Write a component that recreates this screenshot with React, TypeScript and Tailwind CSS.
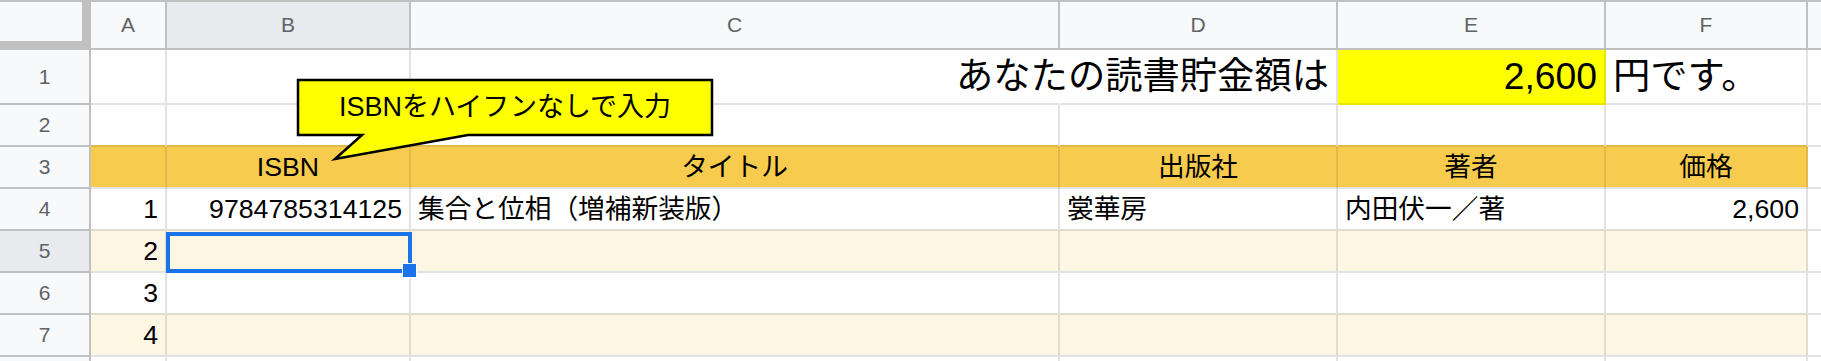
import React from "react";

const FONT = "font-['Liberation_Sans','Noto_Sans_CJK_JP',sans-serif]";

type Align = "l" | "r" | "c";

function Cell({
  className = "",
  align = "r",
  children,
}: {
  className?: string;
  align?: Align;
  children?: React.ReactNode;
}) {
  const a = align === "r" ? "justify-end" : align === "c" ? "justify-center" : "justify-start";
  return (
    <div className={`flex items-center whitespace-nowrap border-r-2 border-b-2 px-[7px] ${a} ${className}`}>
      {children}
    </div>
  );
}

function ColHead({ label, selected = false }: { label: string; selected?: boolean }) {
  return (
    <div
      className={`flex items-center justify-center border-t-2 border-r-2 border-b-2 border-[#c0c0c0] text-[21px] text-[#5f6368] ${
        selected ? "bg-[#e8eaed]" : "bg-[#f8f9fa]"
      }`}
    >
      {label}
    </div>
  );
}

function RowHead({ n, selected = false }: { n?: number; selected?: boolean }) {
  return (
    <div
      className={`flex items-center justify-center border-r-2 border-b-2 border-[#c0c0c0] text-[21px] text-[#5f6368] ${
        selected ? "bg-[#e8eaed]" : "bg-[#f8f9fa]"
      }`}
    >
      {n}
    </div>
  );
}

type RowDef = {
  n?: number;
  key: number;
  style: string;
  cells: { text?: string; align?: Align }[];
  selected?: boolean;
};

const WHITE = "bg-white border-[#e2e2e3]";
const WHITE_TO_BEIGE = "bg-white border-[#e2e2e3] border-b-[#e1dccb]";
const BEIGE = "bg-[#fdf6e3] border-[#e1dccb] border-b-[#e2e2e3]";

const dataRows: RowDef[] = [
  {
    n: 4,
    key: 4,
    style: WHITE_TO_BEIGE,
    cells: [
      { text: "1", align: "r" },
      { text: "9784785314125", align: "r" },
      { text: "集合と位相（増補新装版）", align: "l" },
      { text: "裳華房", align: "l" },
      { text: "内田伏一／著", align: "l" },
      { text: "2,600", align: "r" },
    ],
  },
  { n: 5, key: 5, style: BEIGE, selected: true, cells: [{ text: "2" }, {}, {}, {}, {}, {}] },
  { n: 6, key: 6, style: WHITE_TO_BEIGE, cells: [{ text: "3" }, {}, {}, {}, {}, {}] },
  { n: 7, key: 7, style: BEIGE, cells: [{ text: "4" }, {}, {}, {}, {}, {}] },
  { key: 8, style: WHITE, cells: [{}, {}, {}, {}, {}, {}] },
];

export default function App() {
  return (
    <div className={`relative h-[361px] w-[1821px] overflow-hidden bg-white text-black ${FONT}`}>
      <div className="grid grid-cols-[91px_76px_244px_649px_278px_268px_202px_1fr] grid-rows-[50px_55px_42px_42px_42px_42px_42px_42px_42px] text-[26.7px]">
        {/* Column headers */}
        <div className="border-t-2 border-r-[9px] border-b-[9px] border-[#c0c0c0] bg-[#f8f9fa]" />
        <ColHead label="A" />
        <ColHead label="B" selected />
        <ColHead label="C" />
        <ColHead label="D" />
        <ColHead label="E" />
        <ColHead label="F" />
        <ColHead label="" />

        {/* Row 1 */}
        <RowHead n={1} />
        <Cell className={WHITE} />
        <Cell className={WHITE} />
        <Cell className="bg-white border-[#e2e2e3] border-r-white" />
        <Cell className={`${WHITE} text-[37.3px]`} align="r">
          <span>あなたの読書貯金額は</span>
        </Cell>
        <Cell className="bg-[#ffff00] border-[#e6e600] text-[37.3px]" align="r">
          <span>2,600</span>
        </Cell>
        <Cell className={`${WHITE} text-[37.3px]`} align="l">
          <span>円です。</span>
        </Cell>
        <Cell className={WHITE} />

        {/* Row 2 */}
        <RowHead n={2} />
        <Cell className="bg-white border-[#e2e2e3] border-b-[#e0b94a]" />
        <Cell className="bg-white border-[#e2e2e3] border-b-[#e0b94a]" />
        <Cell className="bg-white border-[#e2e2e3] border-b-[#e0b94a]" />
        <Cell className="bg-white border-[#e2e2e3] border-b-[#e0b94a]" />
        <Cell className="bg-white border-[#e2e2e3] border-b-[#e0b94a]" />
        <Cell className="bg-white border-[#e2e2e3] border-b-[#e0b94a]" />
        <Cell className={WHITE} />

        {/* Row 3 - table header */}
        <RowHead n={3} />
        <Cell className="bg-[#f7cb4d] border-[#e0b94a] border-b-[#e2e2e3]" />
        <Cell className="bg-[#f7cb4d] border-[#e0b94a] border-b-[#e2e2e3]" align="c">
          ISBN
        </Cell>
        <Cell className="bg-[#f7cb4d] border-[#e0b94a] border-b-[#e2e2e3]" align="c">
          タイトル
        </Cell>
        <Cell className="bg-[#f7cb4d] border-[#e0b94a] border-b-[#e2e2e3]" align="c">
          出版社
        </Cell>
        <Cell className="bg-[#f7cb4d] border-[#e0b94a] border-b-[#e2e2e3]" align="c">
          著者
        </Cell>
        <Cell className="bg-[#f7cb4d] border-[#e0b94a] border-b-[#e2e2e3]" align="c">
          価格
        </Cell>
        <Cell className={WHITE} />

        {/* Data rows */}
        {dataRows.map((r) => (
          <React.Fragment key={r.key}>
            <RowHead n={r.n} selected={r.selected} />
            {r.cells.map((c, i) => (
              <Cell key={i} className={r.style} align={c.align ?? "r"}>
                {c.text}
              </Cell>
            ))}
            <Cell className={WHITE} />
          </React.Fragment>
        ))}
      </div>

      {/* Selection box around B5 */}
      <div className="absolute left-[166px] top-[232px] h-[41px] w-[246px] border-4 border-[#1a73e8]" />
      <div className="absolute left-[402px] top-[263px] h-[15px] w-[15px] border border-white bg-[#1a73e8]" />

      {/* Callout */}
      <div className="absolute left-[296px] top-[78px] h-[84px] w-[420px]">
        <svg width="420" height="84" viewBox="0 0 420 84" className="absolute left-0 top-0">
          <polygon
            points="2,2 416,2 416,57 172,57 39,81 66,57 2,57"
            fill="#ffff00"
            stroke="#000"
            strokeWidth="2.5"
            strokeLinejoin="miter"
          />
        </svg>
        <div className="absolute left-[2px] top-[2px] flex h-[55px] w-[414px] items-center justify-center whitespace-nowrap text-[27px] text-black">
          ISBNをハイフンなしで入力
        </div>
      </div>
    </div>
  );
}
